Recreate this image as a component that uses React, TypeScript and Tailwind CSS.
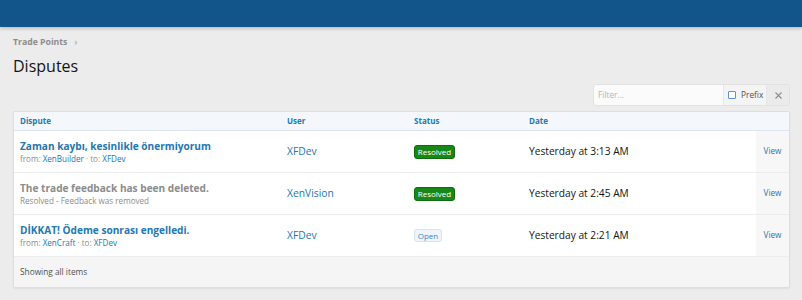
import React from "react";

const font = { fontFamily: '"Open Sans", "Noto Sans", sans-serif' };

function Badge({ kind }: { kind: "resolved" | "open" }) {
  if (kind === "resolved")
    return (
      <span className="inline-flex h-[14px] w-[41px] items-center justify-center rounded-[3px] border border-[#0e6e0e] bg-[#178717] text-[8px] text-white">
        Resolved
      </span>
    );
  return (
    <span className="inline-flex h-[13px] w-[28px] items-center justify-center rounded-[3px] border border-[#d3e4f3] bg-[#eef5fc] text-[8px] text-[#4a86b8]">
      Open
    </span>
  );
}

type Row = {
  title: string;
  deleted?: boolean;
  from?: string;
  to?: string;
  sub?: string;
  user: string;
  status: "resolved" | "open";
  date: string;
};

const rows: Row[] = [
  { title: "Zaman kaybı, kesinlikle önermiyorum", from: "XenBuilder", to: "XFDev", user: "XFDev", status: "resolved", date: "Yesterday at 3:13 AM" },
  { title: "The trade feedback has been deleted.", deleted: true, sub: "Resolved - Feedback was removed", user: "XenVision", status: "resolved", date: "Yesterday at 2:45 AM" },
  { title: "DİKKAT! Ödeme sonrası engelledi.", from: "XenCraft", to: "XFDev", user: "XFDev", status: "open", date: "Yesterday at 2:21 AM" },
];

export default function App() {
  return (
    <div className="h-[300px] w-[802px] overflow-hidden bg-[#ececec]" style={font}>
      <div className="h-[27px] bg-[#11558a] shadow-[0_2px_3px_rgba(0,0,0,0.18)]" />
      <div className="pl-[13px] pr-[12px]">
        <div className="mt-[9px] flex h-[14px] items-center gap-[7px] text-[8.7px] font-bold text-[#8c8c8c]">
          <span>Trade Points</span>
          <span className="font-normal">›</span>
        </div>
        <h1 className="mt-[4px] h-[24px] text-[16px] font-normal leading-[24px] text-[#141414]">Disputes</h1>
        <div className="mt-[6px] flex justify-end">
          <div className="flex h-[22px] overflow-hidden rounded-[3px] border border-[#e2e2e2] bg-[#fbfbfb] text-[8.3px]">
            <div className="flex w-[129px] items-center px-[4px] text-[#b4b4b4]">Filter...</div>
            <div className="flex w-[43px] items-center gap-[5px] border-l border-[#e6e6e6] bg-[#f4f4f4] pl-[4px] text-[#505050]">
              <span className="inline-block h-[8px] w-[8px] rounded-[1px] border border-[#5b95cc] bg-white" />
              <span>Prefix</span>
            </div>
            <div className="flex w-[23px] items-center justify-center border-l border-[#e6e6e6] bg-[#ebebeb]">
              <svg width="7" height="7" viewBox="0 0 7 7">
                <path d="M0.5 0.5L6.5 6.5M6.5 0.5L0.5 6.5" stroke="#8c8c8c" strokeWidth="1.1" />
              </svg>
            </div>
          </div>
        </div>
        <div className="mt-[5px] overflow-hidden rounded-[2px] border border-[#dedede] bg-white shadow-[0_1px_2px_rgba(0,0,0,0.06)]">
          <div className="flex h-[19px] items-center border-b border-[#dde6ee] bg-[#f4f8fc] text-[8px] font-bold text-[#2577b1]">
            <div className="w-[266px] pl-[6px]">Dispute</div>
            <div className="w-[127px] pl-[7px]">User</div>
            <div className="w-[115px] pl-[7px]">Status</div>
            <div className="flex-1 pl-[7px]">Date</div>
          </div>
          {rows.map((r, i) => (
            <div key={i} className="flex h-[42px] items-stretch border-b border-[#ececec]">
              <div className="flex w-[266px] flex-col justify-center pl-[6px] pb-[1px]">
                <div className={`text-[10.1px] font-bold leading-[14px] ${r.deleted ? "text-[#8c8c8c]" : "text-[#2577b1]"}`}>{r.title}</div>
                <div className="text-[8.1px] leading-[11px] text-[#8c8c8c]">
                  {r.sub ? (
                    r.sub
                  ) : (
                    <>
                      from: <span className="text-[#2577b1]">{r.from}</span> · to: <span className="text-[#2577b1]">{r.to}</span>
                    </>
                  )}
                </div>
              </div>
              <div className="flex w-[127px] items-center pl-[7px] text-[10.3px] text-[#2577b1]">{r.user}</div>
              <div className="flex w-[115px] items-center pl-[7px]">
                <Badge kind={r.status} />
              </div>
              <div className="flex flex-1 items-center pl-[7px] text-[10.2px] text-[#141414]">{r.date}</div>
              <div className="flex w-[33px] items-center justify-center bg-[#f7f7f7] text-[8.2px] text-[#2577b1]">View</div>
            </div>
          ))}
          <div className="flex h-[30px] items-center bg-[#f5f5f5] pl-[6px] text-[8.3px] text-[#505050]">Showing all items</div>
        </div>
      </div>
    </div>
  );
}
